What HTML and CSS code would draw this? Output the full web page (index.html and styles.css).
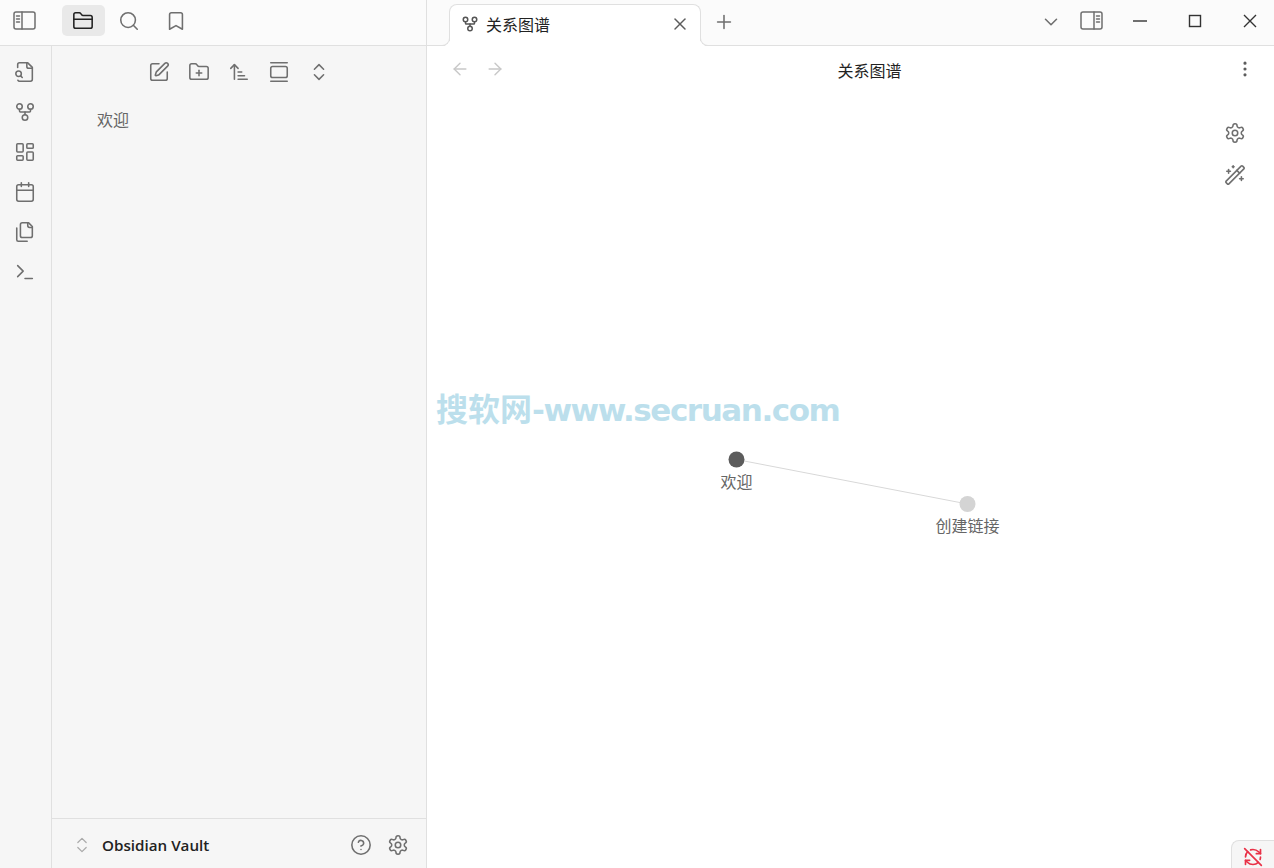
FILE: index.html
```html
<!DOCTYPE html>
<html lang="zh">
<head>
    <meta charset="UTF-8">
    <title>关系图谱 - Obsidian Vault</title>
    <link rel="stylesheet" href="styles.css">
</head>
<body>
    <svg class="sprite" xmlns="http://www.w3.org/2000/svg">
        <symbol id="i-fork" viewBox="0 0 24 24"><circle cx="12" cy="18" r="3"/><circle cx="6" cy="6" r="3"/><circle cx="18" cy="6" r="3"/><path d="M18 9v2c0 .6-.4 1-1 1H7c-.6 0-1-.4-1-1V9"/><path d="M12 12v3"/></symbol>
        <symbol id="i-gear" viewBox="0 0 24 24"><path d="M12.22 2h-.44a2 2 0 0 0-2 2v.18a2 2 0 0 1-1 1.73l-.43.25a2 2 0 0 1-2 0l-.15-.08a2 2 0 0 0-2.73.73l-.22.38a2 2 0 0 0 .73 2.73l.15.1a2 2 0 0 1 1 1.72v.51a2 2 0 0 1-1 1.74l-.15.09a2 2 0 0 0-.73 2.73l.22.38a2 2 0 0 0 2.73.73l.15-.08a2 2 0 0 1 2 0l.43.25a2 2 0 0 1 1 1.73V20a2 2 0 0 0 2 2h.44a2 2 0 0 0 2-2v-.18a2 2 0 0 1 1-1.73l.43-.25a2 2 0 0 1 2 0l.15.08a2 2 0 0 0 2.73-.73l.22-.39a2 2 0 0 0-.73-2.73l-.15-.08a2 2 0 0 1-1-1.74v-.5a2 2 0 0 1 1-1.74l.15-.09a2 2 0 0 0 .73-2.73l-.22-.38a2 2 0 0 0-2.73-.73l-.15.08a2 2 0 0 1-2 0l-.43-.25a2 2 0 0 1-1-1.73V4a2 2 0 0 0-2-2z"/><circle cx="12" cy="12" r="3"/></symbol>
        <symbol id="i-updown" viewBox="0 0 24 24"><path d="m7 15 5 5 5-5"/><path d="m7 9 5-5 5 5"/></symbol>
    </svg>

    <div class="left-side">
        <div class="left-top">
            <button class="sidebar-toggle">
                <svg class="icon toggle-icon" viewBox="0 0 23 19"><rect x="1" y="1" width="21" height="17" rx="2"/><path d="M9 1v17"/><path d="M3.5 5h3M3.5 8h3M3.5 11h3" /></svg>
            </button>
            <div class="side-tabs">
                <div class="side-tab active">
                    <svg class="icon icon-22" viewBox="0 0 24 24"><path d="M20 20a2 2 0 0 0 2-2V8a2 2 0 0 0-2-2h-7.9a2 2 0 0 1-1.69-.9L9.6 3.9A2 2 0 0 0 7.93 3H4a2 2 0 0 0-2 2v13a2 2 0 0 0 2 2Z"/><path d="M2 10h20"/></svg>
                </div>
                <div class="side-tab">
                    <svg class="icon icon-22" viewBox="0 0 24 24"><circle cx="11" cy="11" r="8"/><path d="m21 21-4.3-4.3"/></svg>
                </div>
                <div class="side-tab">
                    <svg class="icon icon-22" viewBox="0 0 24 24"><path d="m19 21-7-4-7 4V5a2 2 0 0 1 2-2h10a2 2 0 0 1 2 2v16z"/></svg>
                </div>
            </div>
        </div>
        <div class="left-body">
            <div class="ribbon">
                <button class="ribbon-btn"><svg class="icon icon-22" viewBox="0 0 24 24"><path d="M14 2v4a2 2 0 0 0 2 2h4"/><path d="M4.268 21a2 2 0 0 0 1.727 1H18a2 2 0 0 0 2-2V7l-5-5H6a2 2 0 0 0-2 2v3"/><path d="m9 18-1.5-1.5"/><circle cx="5" cy="14" r="3"/></svg></button>
                <button class="ribbon-btn"><svg class="icon icon-22"><use href="#i-fork"/></svg></button>
                <button class="ribbon-btn"><svg class="icon icon-22" viewBox="0 0 24 24"><rect x="3" y="3" width="7" height="9" rx="1"/><rect x="14" y="3" width="7" height="5" rx="1"/><rect x="14" y="12" width="7" height="9" rx="1"/><rect x="3" y="16" width="7" height="5" rx="1"/></svg></button>
                <button class="ribbon-btn"><svg class="icon icon-22" viewBox="0 0 24 24"><path d="M8 2v4"/><path d="M16 2v4"/><rect x="3" y="4" width="18" height="18" rx="2"/><path d="M3 10h18"/></svg></button>
                <button class="ribbon-btn"><svg class="icon icon-22" viewBox="0 0 24 24"><path d="M20 7h-3a2 2 0 0 1-2-2V2"/><path d="M9 18a2 2 0 0 1-2-2V4a2 2 0 0 1 2-2h7l4 4v10a2 2 0 0 1-2 2Z"/><path d="M3 7.6v12.8A1.6 1.6 0 0 0 4.6 22h9.8"/></svg></button>
                <button class="ribbon-btn"><svg class="icon icon-22" viewBox="0 0 24 24"><polyline points="4 17 10 11 4 5"/><line x1="12" x2="20" y1="19" y2="19"/></svg></button>
            </div>
            <div class="file-panel">
                <div class="nav-buttons">
                    <button class="nav-btn"><svg class="icon icon-22" viewBox="0 0 24 24"><path d="M12 3H5a2 2 0 0 0-2 2v14a2 2 0 0 0 2 2h14a2 2 0 0 0 2-2v-7"/><path d="M18.375 2.625a1 1 0 0 1 3 3l-9.013 9.014a2 2 0 0 1-.853.505l-2.873.84a.5.5 0 0 1-.62-.62l.84-2.873a2 2 0 0 1 .506-.852z"/></svg></button>
                    <button class="nav-btn"><svg class="icon icon-22" viewBox="0 0 24 24"><path d="M12 10v6"/><path d="M9 13h6"/><path d="M20 20a2 2 0 0 0 2-2V8a2 2 0 0 0-2-2h-7.9a2 2 0 0 1-1.69-.9L9.6 3.9A2 2 0 0 0 7.93 3H4a2 2 0 0 0-2 2v13a2 2 0 0 0 2 2Z"/></svg></button>
                    <button class="nav-btn"><svg class="icon icon-22" viewBox="0 0 24 24"><path d="m3 8 4-4 4 4"/><path d="M7 4v16"/><path d="M11 12h4"/><path d="M11 16h7"/><path d="M11 20h10"/></svg></button>
                    <button class="nav-btn"><svg class="icon icon-22" viewBox="0 0 24 24"><path d="M3 2h18"/><rect x="3" y="6" width="18" height="12" rx="2"/><path d="M3 22h18"/></svg></button>
                    <button class="nav-btn"><svg class="icon icon-22"><use href="#i-updown"/></svg></button>
                </div>
                <div class="file-tree">
                    <div class="file-item">欢迎</div>
                </div>
                <div class="vault-bar">
                    <svg class="icon vault-chevron"><use href="#i-updown"/></svg>
                    <span class="vault-name">Obsidian Vault</span>
                    <svg class="icon icon-22 vault-help" viewBox="0 0 24 24"><circle cx="12" cy="12" r="10"/><path d="M9.09 9a3 3 0 0 1 5.83 1c0 2-3 3-3 3"/><path d="M12 17h.01"/></svg>
                    <svg class="icon icon-22"><use href="#i-gear"/></svg>
                </div>
            </div>
        </div>
    </div>

    <div class="main">
        <div class="tab-bar">
            <div class="tab">
                <svg class="icon tab-icon"><use href="#i-fork"/></svg>
                <span class="tab-title">关系图谱</span>
                <svg class="icon tab-close" viewBox="0 0 24 24"><path d="M18 6 6 18"/><path d="m6 6 12 12"/></svg>
            </div>
            <svg class="icon icon-22 tab-add" viewBox="0 0 24 24"><path d="M5 12h14"/><path d="M12 5v14"/></svg>
            <div class="tab-spacer"></div>
            <svg class="icon icon-22 tab-list" viewBox="0 0 24 24"><path d="m6 9 6 6 6-6"/></svg>
            <svg class="icon toggle-icon right-toggle" viewBox="0 0 23 19"><rect x="1" y="1" width="21" height="17" rx="2"/><path d="M14 1v17"/><path d="M16.5 5h3M16.5 8h3M16.5 11h3"/></svg>
            <div class="window-controls">
                <div class="win-btn"><svg viewBox="0 0 14 14"><path d="M0 7h14"/></svg></div>
                <div class="win-btn"><svg viewBox="0 0 14 14"><rect x="1.5" y="1.5" width="11" height="11"/></svg></div>
                <div class="win-btn"><svg viewBox="0 0 14 14"><path d="M1 1l12 12M13 1 1 13"/></svg></div>
            </div>
        </div>
        <div class="view-header">
            <div class="view-nav">
                <svg class="icon nav-arrow" viewBox="0 0 24 24"><path d="m12 19-7-7 7-7"/><path d="M19 12H5"/></svg>
                <svg class="icon nav-arrow" viewBox="0 0 24 24"><path d="M5 12h14"/><path d="m12 5 7 7-7 7"/></svg>
            </div>
            <div class="view-title">关系图谱</div>
            <svg class="icon view-more" viewBox="0 0 24 24"><circle cx="12" cy="12" r="1"/><circle cx="12" cy="5" r="1"/><circle cx="12" cy="19" r="1"/></svg>
        </div>
        <div class="graph">
            <svg class="graph-canvas" width="847" height="776">
                <line x1="309.5" y1="367.5" x2="540.5" y2="412" class="edge"/>
                <circle cx="309.5" cy="367.5" r="8" class="node-main"/>
                <circle cx="540.5" cy="412" r="8" class="node-ghost"/>
                <text x="309.5" y="396" class="node-label">欢迎</text>
                <text x="540.5" y="440" class="node-label">创建链接</text>
            </svg>
            <div class="graph-controls">
                <svg class="icon icon-22"><use href="#i-gear"/></svg>
                <svg class="icon icon-22" viewBox="0 0 24 24"><path d="m21.64 3.64-1.28-1.28a1.21 1.21 0 0 0-1.72 0L2.36 18.64a1.21 1.21 0 0 0 0 1.72l1.28 1.28a1.2 1.2 0 0 0 1.72 0L21.64 5.36a1.2 1.2 0 0 0 0-1.72"/><path d="m14 7 3 3"/><path d="M5 6v4"/><path d="M19 14v4"/><path d="M10 2v2"/><path d="M7 8H3"/><path d="M21 16h-4"/><path d="M11 3H9"/></svg>
            </div>
            <div class="watermark"><span class="watermark-cn">搜软网</span>-www.secruan.com</div>
        </div>
        <div class="sync-status">
            <svg class="icon" viewBox="0 0 24 24"><path d="M21 8L18.74 5.74A9.75 9.75 0 0 0 12 3C11 3 10.03 3.16 9.13 3.47"/><path d="M8 16H3v5"/><path d="M3 12C3 9.51 4 7.26 5.64 5.64"/><path d="m3 16 2.26 2.26A9.75 9.75 0 0 0 12 21c2.49 0 4.74-1 6.36-2.64"/><path d="M21 12c0 1-.16 1.97-.47 2.87"/><path d="M21 3v5h-5"/><path d="M22 22 2 2"/></svg>
        </div>
    </div>
</body>
</html>
```

FILE: styles.css
```css
* {
    box-sizing: border-box;
}

html, body {
    height: 100%;
}

body {
    margin: 0;
    display: flex;
    overflow: hidden;
    background: #ffffff;
    color: #222222;
    font-family: "Open Sans", "Noto Sans CJK SC", sans-serif;
    font-size: 16px;
}

button {
    padding: 0;
    border: none;
    background: none;
}

.sprite {
    display: none;
}

.icon {
    width: 20px;
    height: 20px;
    flex: none;
    fill: none;
    stroke: #6f6f6f;
    stroke-width: 1.8;
    stroke-linecap: round;
    stroke-linejoin: round;
}

.icon-22 {
    width: 22px;
    height: 22px;
    stroke-width: 1.7;
}

.toggle-icon {
    width: 23px;
    height: 19px;
    stroke-width: 1.5;
}

/* left side */

.left-side {
    width: 427px;
    flex: none;
    display: flex;
    flex-direction: column;
    border-right: 1px solid #e0e0e0;
}

.left-top {
    height: 46px;
    flex: none;
    display: flex;
    align-items: flex-start;
    padding: 5px 0 0 13px;
    background: #fbfbfb;
    border-bottom: 1px solid #e0e0e0;
}

.sidebar-toggle {
    display: flex;
    height: 31px;
    align-items: center;
    margin-right: 26px;
}

.side-tabs {
    display: flex;
    gap: 4px;
}

.side-tab {
    width: 43px;
    height: 31px;
    display: flex;
    align-items: center;
    justify-content: center;
    padding-right: 3px;
    border-radius: 5px;
}

.side-tab.active {
    padding-right: 1px;
    background: #e9e9e9;
}

.side-tab.active .icon {
    stroke: #222222;
}

.left-body {
    flex: 1;
    min-height: 0;
    display: flex;
    background: #f6f6f6;
}

.ribbon {
    width: 52px;
    flex: none;
    padding: 6px 2px 0 0;
    border-right: 1px solid #e0e0e0;
}

.ribbon-btn {
    width: 100%;
    height: 40px;
    display: flex;
    align-items: center;
    justify-content: center;
}

.file-panel {
    flex: 1;
    min-width: 0;
    display: flex;
    flex-direction: column;
}

.nav-buttons {
    display: flex;
    justify-content: center;
    padding-top: 6px;
}

.nav-btn {
    width: 40px;
    height: 40px;
    display: flex;
    align-items: center;
    justify-content: center;
}

.file-tree {
    flex: 1;
    padding: 16px 0 0 45px;
}

.file-item {
    line-height: 24px;
    color: #666666;
}

.vault-bar {
    height: 50px;
    flex: none;
    display: flex;
    align-items: center;
    padding: 2px 17px 0 20px;
    border-top: 1px solid #e0e0e0;
}

.vault-chevron {
    width: 20px;
    height: 20px;
    stroke: #ababab;
    stroke-width: 1.5;
}

.vault-name {
    flex: 1;
    margin-left: 10px;
    font-size: 15.2px;
    font-weight: 600;
    color: #222222;
}

.vault-help {
    margin-right: 15px;
}

/* main area */

.main {
    flex: 1;
    min-width: 0;
    display: flex;
    flex-direction: column;
    position: relative;
}

.tab-bar {
    height: 46px;
    flex: none;
    display: flex;
    align-items: flex-start;
    padding: 4px 0 0 22px;
    background: #fbfbfb;
    border-bottom: 1px solid #e0e0e0;
}

.tab {
    position: relative;
    z-index: 1;
    width: 252px;
    height: 42px;
    display: flex;
    align-items: center;
    padding: 0 12px 4px 11px;
    background: #ffffff;
    border: 1px solid #e0e0e0;
    border-bottom: none;
    border-radius: 8px 8px 0 0;
}

.tab::before,
.tab::after {
    content: "";
    position: absolute;
    bottom: 0;
    width: 8px;
    height: 8px;
    border-bottom: 1px solid #e0e0e0;
    box-shadow: 0 4px 0 #ffffff;
}

.tab::before {
    left: -9px;
    border-right: 1px solid #e0e0e0;
    border-bottom-right-radius: 8px;
    box-shadow: 4px 4px 0 #ffffff;
}

.tab::after {
    right: -9px;
    border-left: 1px solid #e0e0e0;
    border-bottom-left-radius: 8px;
    box-shadow: -4px 4px 0 #ffffff;
}

.tab-icon {
    width: 18px;
    height: 18px;
    stroke: #555555;
    stroke-width: 2;
}

.tab-title {
    flex: 1;
    margin-left: 7px;
    color: #222222;
}

.tab-close {
    stroke: #5c5c5c;
    width: 20px;
    height: 20px;
    margin-right: -2px;
}

.tab-add {
    margin: 7px 0 0 12px;
}

.tab-spacer {
    flex: 1;
}

.tab-list {
    margin: 7px 18px 0 0;
}

.right-toggle {
    margin: 7px 13px 0 0;
}

.window-controls {
    display: flex;
    gap: 7px;
    margin-top: -4px;
}

.win-btn {
    width: 48px;
    height: 41px;
    display: flex;
    align-items: center;
    justify-content: center;
}

.win-btn svg {
    width: 14px;
    height: 14px;
    fill: none;
    stroke: #333333;
    stroke-width: 1.4;
}

.view-header {
    height: 46px;
    flex: none;
    display: flex;
    align-items: center;
    padding: 0 19px 0 23px;
}

.view-nav {
    display: flex;
    gap: 15px;
}

.nav-arrow {
    stroke: #c8c8c8;
    stroke-width: 1.7;
}

.view-title {
    flex: 1;
    padding-top: 2px;
    text-align: center;
    color: #222222;
    margin-left: -1px;
}

.view-more {
    width: 20px;
    height: 20px;
    stroke: #5c5c5c;
    stroke-width: 1.8;
}

.graph {
    flex: 1;
    position: relative;
    overflow: hidden;
}

.graph-canvas {
    position: absolute;
    top: 0;
    left: 0;
}

.edge {
    stroke: #d8d8d8;
    stroke-width: 1;
}

.node-main {
    fill: #5c5c5c;
}

.node-ghost {
    fill: #d4d4d4;
}

.node-label {
    font-size: 16px;
    text-anchor: middle;
    fill: #666666;
}

.graph-controls {
    position: absolute;
    top: 30px;
    right: 28px;
    display: flex;
    flex-direction: column;
    align-items: center;
    gap: 20px;
}

.watermark {
    position: absolute;
    top: 298px;
    left: 9px;
    font-family: "DejaVu Sans", "Noto Sans CJK SC", sans-serif;
    font-size: 31px;
    font-weight: 700;
    line-height: 40px;
    letter-spacing: -1.45px;
    white-space: nowrap;
    color: #bcdfec;
}

.watermark-cn {
    font-size: 32px;
    letter-spacing: 0;
}

.sync-status {
    position: absolute;
    right: 0;
    bottom: 0;
    width: 43px;
    height: 28px;
    display: flex;
    justify-content: center;
    padding-top: 6px;
    background: #f6f6f6;
    border: 1px solid #e0e0e0;
    border-width: 1px 0 0 1px;
    border-radius: 8px 0 0 0;
}

.sync-status .icon {
    stroke: #e93147;
    stroke-width: 2;
}
```
